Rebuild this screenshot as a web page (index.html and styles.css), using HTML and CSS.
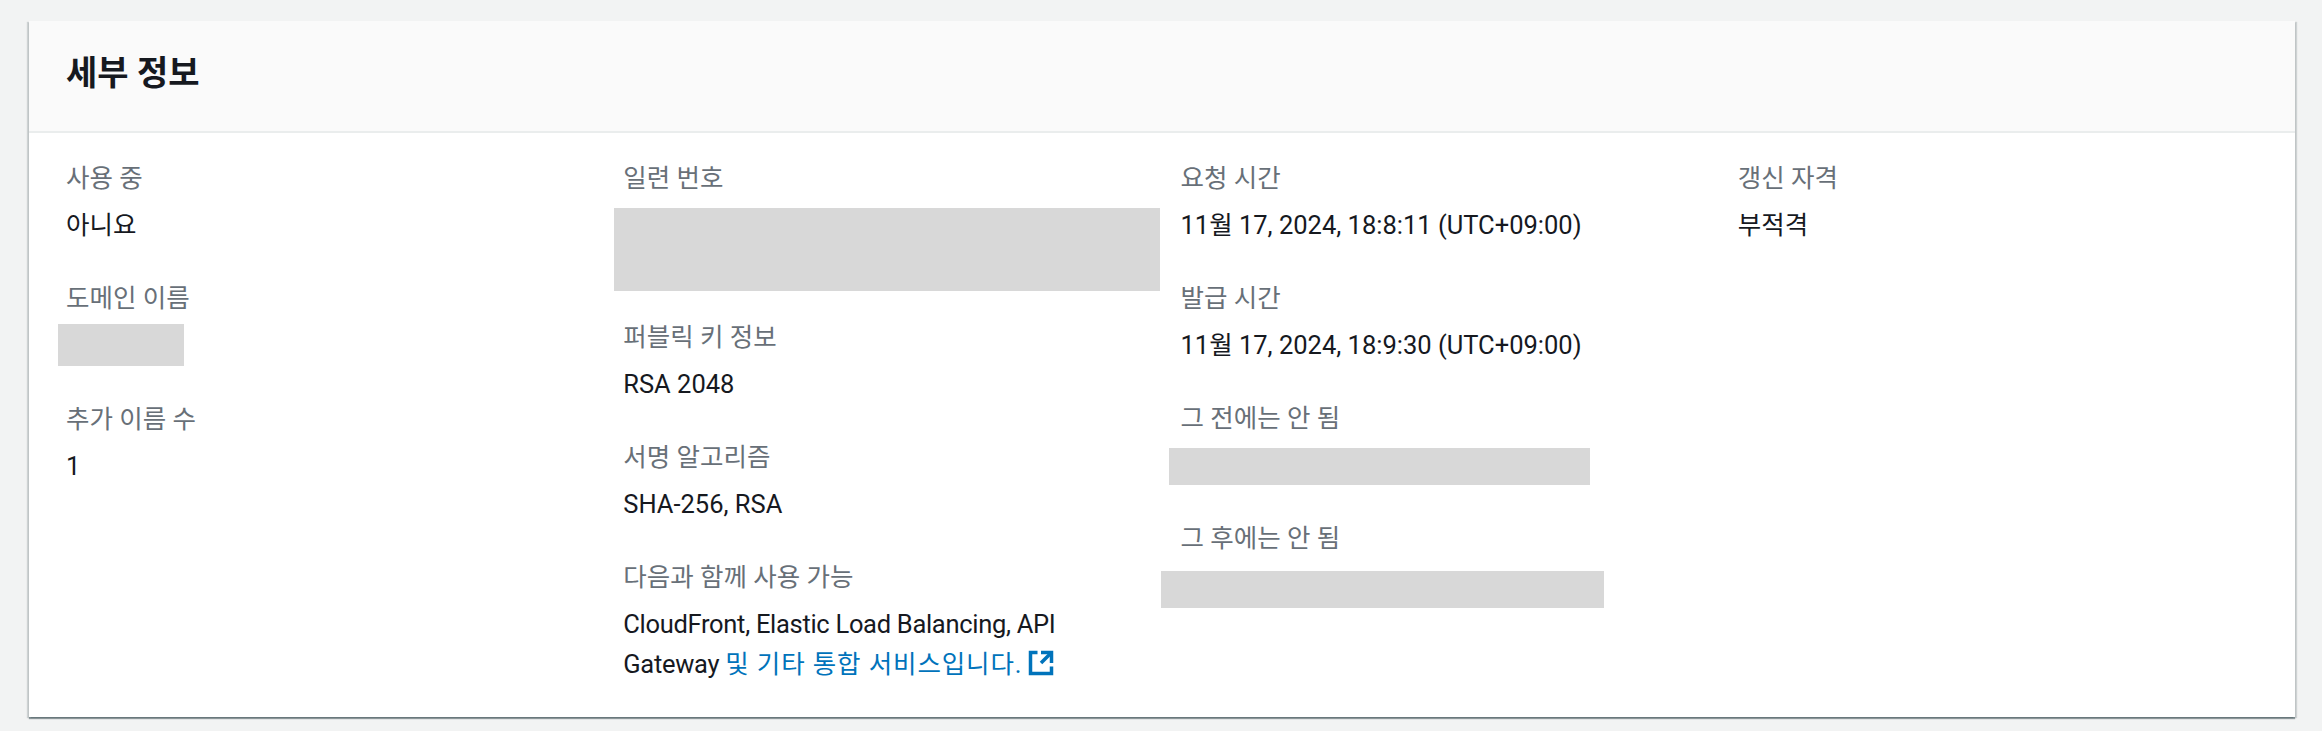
FILE: index.html
```html
<!DOCTYPE html>
<html lang="ko">
<head>
    <meta charset="UTF-8">
    <meta name="viewport" content="width=device-width, initial-scale=1.0">
    <title>세부 정보</title>
    <link rel="stylesheet" href="styles.css">
</head>
<body>

    <section class="card">
        <div class="card-header">
            <h2>세부 정보</h2>
        </div>
        <div class="card-body">
            <div class="column">
                <div class="field">
                    <div class="label">사용 중</div>
                    <div class="value">아니요</div>
                </div>
                <div class="field">
                    <div class="label">도메인 이름</div>
                    <div class="value"><div class="redact redact-domain"></div></div>
                </div>
                <div class="field">
                    <div class="label">추가 이름 수</div>
                    <div class="value">1</div>
                </div>
            </div>
            <div class="column">
                <div class="field">
                    <div class="label">일련 번호</div>
                    <div class="value value-tall"><div class="redact redact-serial"></div></div>
                </div>
                <div class="field">
                    <div class="label">퍼블릭 키 정보</div>
                    <div class="value">RSA 2048</div>
                </div>
                <div class="field">
                    <div class="label">서명 알고리즘</div>
                    <div class="value">SHA-256, RSA</div>
                </div>
                <div class="field">
                    <div class="label">다음과 함께 사용 가능</div>
                    <div class="value value-lines">CloudFront, Elastic Load Balancing, API Gateway <a href="#" class="link">및 기타 통합 서비스입니다.
                        <svg class="icon" viewBox="0 0 16 16" fill="none" stroke="currentColor" stroke-width="2">
                            <path d="M14 8V2H8"/>
                            <path d="M14 2 8 8"/>
                            <path d="M6 2H2v12h12v-4"/>
                        </svg></a></div>
                </div>
            </div>
            <div class="column">
                <div class="field">
                    <div class="label">요청 시간</div>
                    <div class="value">11월 17, 2024, 18:8:11 (UTC+09:00)</div>
                </div>
                <div class="field">
                    <div class="label">발급 시간</div>
                    <div class="value">11월 17, 2024, 18:9:30 (UTC+09:00)</div>
                </div>
                <div class="field">
                    <div class="label">그 전에는 안 됨</div>
                    <div class="value"><div class="redact redact-before"></div></div>
                </div>
                <div class="field">
                    <div class="label">그 후에는 안 됨</div>
                    <div class="value"><div class="redact redact-after"></div></div>
                </div>
            </div>
            <div class="column">
                <div class="field">
                    <div class="label">갱신 자격</div>
                    <div class="value">부적격</div>
                </div>
            </div>
        </div>
    </section>

</body>
</html>
```

FILE: styles.css
```css
body {
    font-family: "Roboto", "Noto Sans CJK KR", sans-serif;
    font-size: 25.5px;
    line-height: 40px;
    color: #16191f;
    background: #f2f3f3;
    margin: 0;
    padding: 21px 27px 14px 29px;
}

.card {
    background: white;
    box-shadow: 0 2px 1px 0 rgba(0, 28, 36, 0.4), 2px 1px 1px 0 rgba(0, 28, 36, 0.15), -2px 1px 1px 0 rgba(0, 28, 36, 0.15);
}

.card-header {
    background: #fafafa;
    border-bottom: 2px solid #eaeded;
    padding: 32px 37px 0;
    height: 78px;
}

.card-header h2 {
    font-size: 34px;
    line-height: 40px;
    font-weight: 700;
    margin: 0;
}

.card-body {
    display: grid;
    grid-template-columns: repeat(4, minmax(0, 1fr));
    padding: 25px 0 0 37px;
}

.column {
    padding-right: 36px;
}

.field {
    margin-bottom: 33px;
}

.label {
    color: #687078;
    margin-bottom: 7px;
}

.value {
    display: flow-root;
    min-height: 40px;
}

.value-tall {
    height: 79px;
}

.value-lines {
    line-height: 40px;
    letter-spacing: -0.3px;
}

.link {
    color: #0073bb;
    text-decoration: none;
    letter-spacing: 0.9px;
}

.icon {
    width: 28px;
    height: 28px;
    vertical-align: -4px;
    margin-left: -3px;
}

/* gray boxes that hide the real values */
.redact {
    background: #d8d8d8;
}

.redact-domain {
    width: 126px;
    height: 42px;
    margin: -1px 0 0 -8px;
}

.redact-serial {
    width: 546px;
    height: 83px;
    margin: 3px 0 0 -9px;
}

.redact-before {
    width: 421px;
    height: 37px;
    margin: 3px 0 0 -12px;
}

.redact-after {
    width: 443px;
    height: 37px;
    margin: 6px 0 0 -20px;
}
```
